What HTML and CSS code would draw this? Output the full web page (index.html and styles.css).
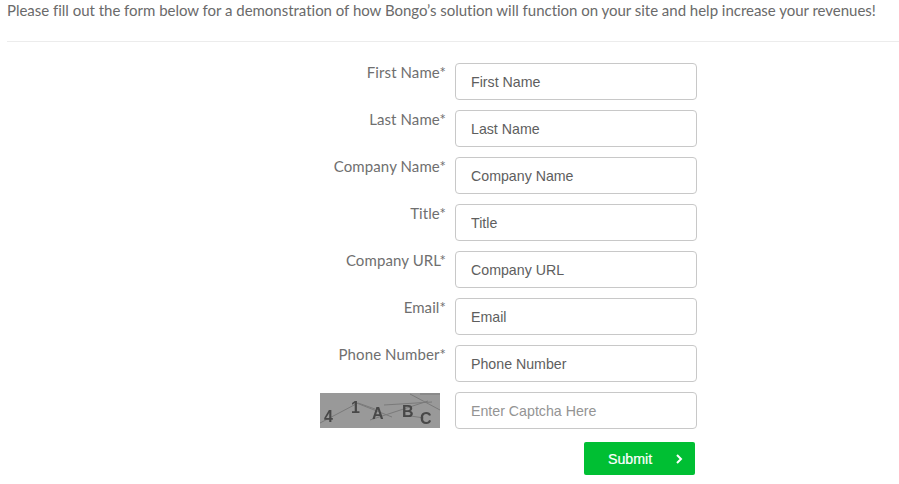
FILE: index.html
```html
<!DOCTYPE html>
<html lang="en">
  <head>
    <meta charset="UTF-8" />
    <meta name="viewport" content="width=device-width, initial-scale=1.0" />
    <title>Request a Demo</title>

    <link rel="stylesheet" href="styles.css">
  </head>
  <body>
    <p class="intro">Please fill out the form below for a demonstration of how Bongo’s solution will function on your site and help increase your revenues!</p>
    <hr class="divider" />
    <form class="demo-form">
      <label for="first">First Name*</label>
      <input id="first" type="text" value="First Name" />

      <label for="last">Last Name*</label>
      <input id="last" type="text" value="Last Name" />

      <label for="company">Company Name*</label>
      <input id="company" type="text" value="Company Name" />

      <label for="title">Title*</label>
      <input id="title" type="text" value="Title" />

      <label for="url">Company URL*</label>
      <input id="url" type="text" value="Company URL" />

      <label for="email">Email*</label>
      <input id="email" type="text" value="Email" />

      <label for="phone">Phone Number*</label>
      <input id="phone" type="text" value="Phone Number" />

      <svg class="captcha" width="120" height="35" viewBox="0 0 120 35">
        <rect width="120" height="35" fill="#999999" />
        <g class="captcha-lines">
          <path d="M0 30 L38 10 L55 16" />
          <path d="M34 9 L72 24" />
          <path d="M50 27 L108 8" />
          <path d="M64 12 L112 9" />
          <path d="M90 1 L120 17" />
          <path d="M100 1 L120 1" />
          <path d="M84 22 L104 25" />
        </g>
        <g class="captcha-text">
          <text x="4" y="29">4</text>
          <text x="31" y="20">1</text>
          <text x="52" y="26">A</text>
          <text x="82" y="24">B</text>
          <text x="100" y="31">C</text>
        </g>
      </svg>
      <input class="captcha-input" type="text" placeholder="Enter Captcha Here" />

      <button class="submit-btn" type="button">
        <span>Submit</span>
        <svg width="8" height="10" viewBox="0 0 8 10">
          <path d="M2 1 L6 5 L2 9" fill="none" stroke="#ffffff" stroke-width="2" />
        </svg>
      </button>
    </form>
  </body>
</html>
```

FILE: styles.css
```css
body {
  margin: 0;
  background-color: #ffffff;
  color: #6a6a6a;
  font-family: "Lato", "Liberation Sans", sans-serif;
  font-size: 15px;
}
.intro {
  margin: 0;
  padding: 1px 0 0 7px;
  line-height: 18px;
  white-space: nowrap;
  letter-spacing: -0.02px;
}
.divider {
  margin: 22px 0 0 7px;
  border: none;
  border-top: 1px solid #ececec;
}
.demo-form {
  display: grid;
  grid-template-columns: 439px 242px;
  column-gap: 9px;
  row-gap: 10px;
  margin: 21px 0 0 7px;
}
.demo-form label {
  text-align: right;
  line-height: 18px;
  letter-spacing: 0.1px;
  color: #6f6f6f;
}
.demo-form input {
  box-sizing: border-box;
  width: 242px;
  height: 37px;
  padding: 0 15px;
  border: 1px solid #c8c8c8;
  border-radius: 4px;
  background: #ffffff;
  color: #5e5e5e;
  font-family: "Liberation Sans", sans-serif;
  font-size: 14.2px;
}
.demo-form input::placeholder {
  color: #949494;
  opacity: 1;
}
.captcha {
  justify-self: end;
  align-self: center;
  margin-right: 6px;
}
.captcha-lines {
  fill: none;
  stroke: #7a7a7a;
  stroke-width: 1;
  filter: blur(0.3px);
}
.captcha-text {
  fill: #484848;
  font-family: "Liberation Sans", sans-serif;
  font-size: 16px;
  font-weight: bold;
  filter: blur(0.5px);
}
.submit-btn {
  grid-column: 2;
  justify-self: end;
  display: flex;
  align-items: center;
  justify-content: space-between;
  box-sizing: border-box;
  width: 111px;
  height: 33px;
  margin: 3px 2px 0 0;
  padding: 0 12px 0 24px;
  border: none;
  border-radius: 2px;
  background: #00bf33;
  color: #ffffff;
  font-family: "Liberation Sans", sans-serif;
  font-size: 14.2px;
  -webkit-text-stroke: 0.2px #ffffff;
}
```
